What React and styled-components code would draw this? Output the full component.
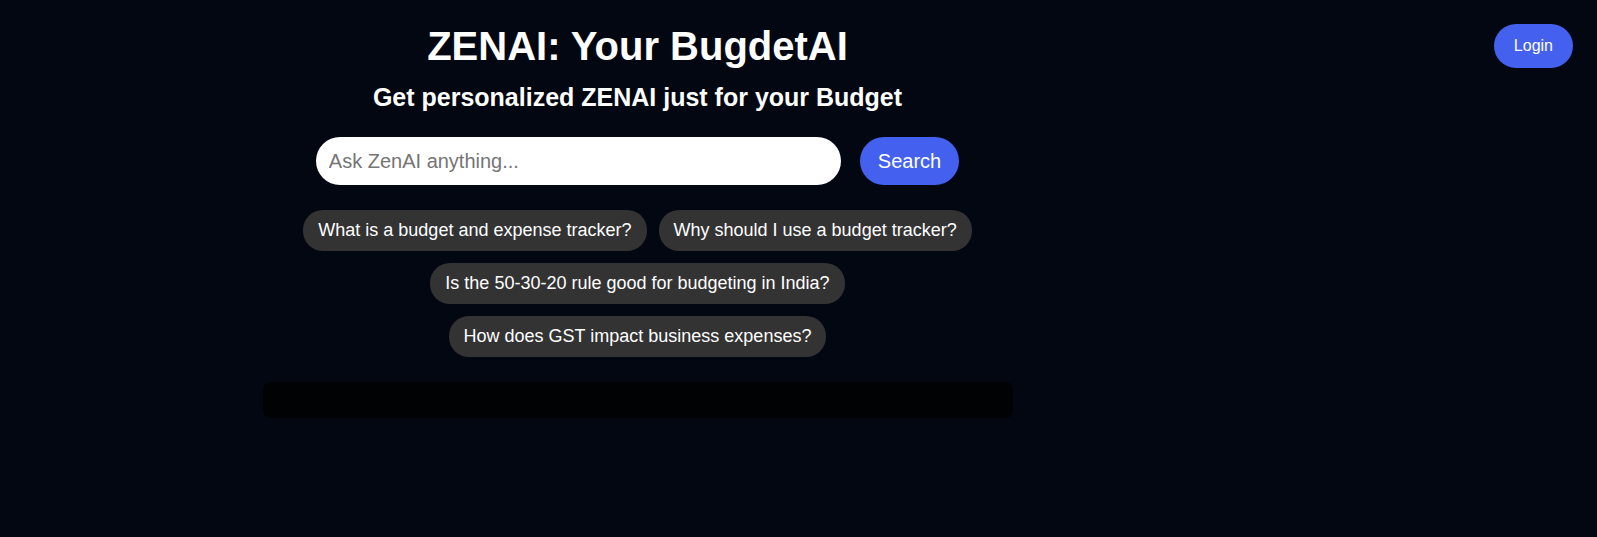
import React, { useState } from "react";
import styled, { createGlobalStyle } from "styled-components";

const GlobalStyle = createGlobalStyle`
  html, body {
    margin: 0;
    padding: 0;
    background: #030712;
    font-family: "Liberation Sans", Arial, sans-serif;
  }
`;

const Page = styled.div`
  display: flex;
  min-height: 537px;
  background: #030712;
  color: #ffffff;
`;

const Main = styled.main`
  width: 1275px;
  display: flex;
  flex-direction: column;
  align-items: center;
  padding-top: 24px;
`;

const Aside = styled.aside`
  flex: 1;
  display: flex;
  justify-content: flex-end;
  align-items: flex-start;
  padding: 24px 24px 0 0;
`;

const Title = styled.h1`
  margin: 0 0 14px;
  font-size: 40px;
  font-weight: 700;
`;

const Subtitle = styled.h2`
  margin: 0 0 25px;
  font-size: 25px;
  font-weight: 700;
`;

const SearchRow = styled.form`
  display: flex;
  gap: 19px;
  margin-bottom: 25px;
`;

const SearchInput = styled.input`
  width: 525px;
  height: 48px;
  box-sizing: border-box;
  border: none;
  border-radius: 24px;
  padding: 0 13px;
  font-family: inherit;
  font-size: 20px;
  color: #222;
  background: #ffffff;
  outline: none;

  &::placeholder {
    color: #757575;
  }
`;

const PillButton = styled.button`
  height: ${(p) => p.$height}px;
  padding: 0 ${(p) => p.$pad}px;
  border: none;
  border-radius: 999px;
  background: #4361ee;
  color: #ffffff;
  font-family: inherit;
  font-size: ${(p) => p.$size}px;
  cursor: pointer;
`;

const Chips = styled.div`
  width: 750px;
  display: flex;
  flex-wrap: wrap;
  justify-content: center;
  gap: 12px;
  margin-bottom: 25px;
`;

const Chip = styled.button`
  height: 41px;
  padding: 0 15px;
  border: none;
  border-radius: 20px;
  background: #333333;
  color: #ffffff;
  font-family: inherit;
  font-size: 18px;
  cursor: pointer;
`;

const ResponseBox = styled.div`
  width: 750px;
  height: 36px;
  border-radius: 8px;
  background: #010204;
`;

const suggestions = [
  "What is a budget and expense tracker?",
  "Why should I use a budget tracker?",
  "Is the 50-30-20 rule good for budgeting in India?",
  "How does GST impact business expenses?",
];

const App = () => {
  const [query, setQuery] = useState("");

  return (
    <>
      <GlobalStyle />
      <Page>
        <Main>
          <Title>ZENAI: Your BugdetAI</Title>
          <Subtitle>Get personalized ZENAI just for your Budget</Subtitle>
          <SearchRow onSubmit={(e) => e.preventDefault()}>
            <SearchInput
              placeholder="Ask ZenAI anything..."
              value={query}
              onChange={(e) => setQuery(e.target.value)}
            />
            <PillButton type="submit" $height={48} $pad={18} $size={20}>
              Search
            </PillButton>
          </SearchRow>
          <Chips>
            {suggestions.map((s) => (
              <Chip key={s} onClick={() => setQuery(s)}>
                {s}
              </Chip>
            ))}
          </Chips>
          <ResponseBox />
        </Main>
        <Aside>
          <PillButton $height={44} $pad={20} $size={16}>
            Login
          </PillButton>
        </Aside>
      </Page>
    </>
  );
};

export default App;
